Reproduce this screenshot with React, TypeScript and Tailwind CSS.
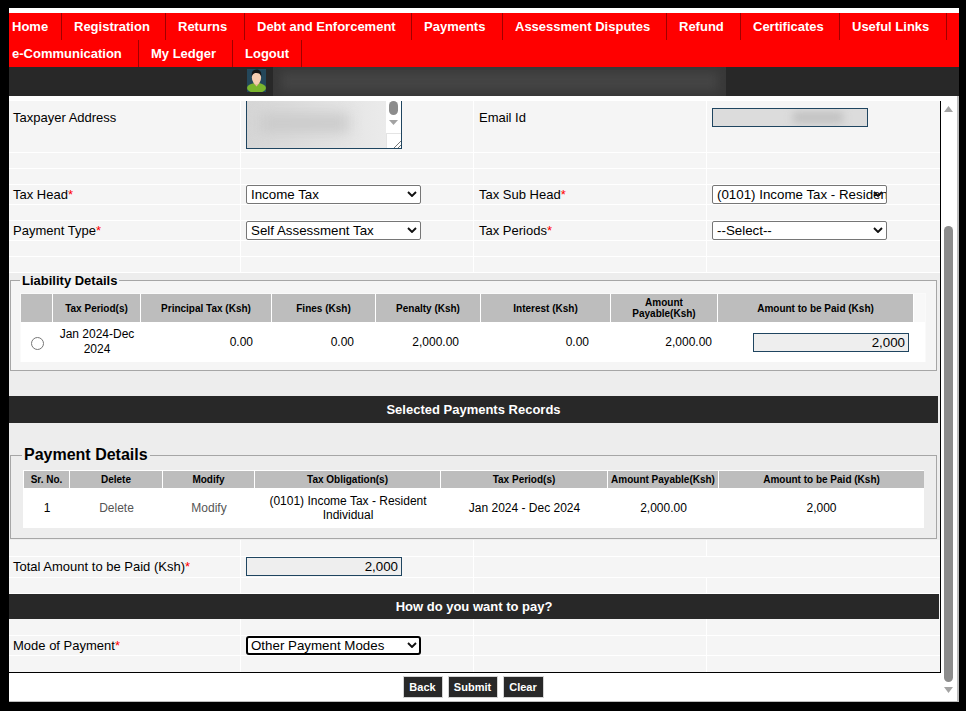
import { ReactNode } from "react";

const navTop = [
  { label: "Home", cls: "w-[53px] pl-[3px]" },
  { label: "Registration", cls: "w-[104px] pl-3" },
  { label: "Returns", cls: "w-[79px] pl-3" },
  { label: "Debt and Enforcement", cls: "w-[167px] pl-3" },
  { label: "Payments", cls: "w-[91px] pl-3" },
  { label: "Assessment Disputes", cls: "w-[164px] pl-3" },
  { label: "Refund", cls: "w-[74px] pl-3" },
  { label: "Certificates", cls: "w-[99px] pl-3" },
  { label: "Useful Links", cls: "w-[107px] pl-3" },
];

const navBottom = [
  { label: "e-Communication", cls: "w-[130px] pl-[3px]" },
  { label: "My Ledger", cls: "w-[94px] pl-3" },
  { label: "Logout", cls: "w-[69px] pl-3" },
];

const liabilityCols = [
  { label: "", cls: "w-[32px]" },
  { label: "Tax Period(s)", cls: "w-[88px]" },
  { label: "Principal Tax (Ksh)", cls: "w-[131px]" },
  { label: "Fines (Ksh)", cls: "w-[104px]" },
  { label: "Penalty (Ksh)", cls: "w-[105px]" },
  { label: "Interest (Ksh)", cls: "w-[130px]" },
  { label: "Amount Payable(Ksh)", cls: "w-[107px]" },
  { label: "Amount to be Paid (Ksh)", cls: "w-[196px]" },
];

const paymentCols = [
  { label: "Sr. No.", cls: "w-[46px]" },
  { label: "Delete", cls: "w-[93px]" },
  { label: "Modify", cls: "w-[92px]" },
  { label: "Tax Obligation(s)", cls: "w-[186px]" },
  { label: "Tax Period(s)", cls: "w-[167px]" },
  { label: "Amount Payable(Ksh)", cls: "w-[111px]" },
  { label: "Amount to be Paid (Ksh)", cls: "w-[205px]" },
];

const actions = [
  { label: "Back", cls: "w-[40px]" },
  { label: "Submit", cls: "w-[50px]" },
  { label: "Clear", cls: "w-[41px]" },
];

function NavRow({ items }: { items: { label: string; cls: string }[] }) {
  return (
    <div className="flex h-[27px]">
      {items.map((item) => (
        <a
          key={item.label}
          href="#"
          className={`${item.cls} flex items-center border-r border-[#a00000] text-[13px] font-bold text-white`}
        >
          {item.label}
        </a>
      ))}
    </div>
  );
}

function Required() {
  return <span className="text-[#ff0000]">*</span>;
}

// one row of the four column form table
function FormRow({ h, cells }: { h: string; cells?: ReactNode[] }) {
  return (
    <div className={`${h} grid grid-cols-[232px_233px_233px_233px] border-b border-white`}>
      {[0, 1, 2, 3].map((i) => (
        <div
          key={i}
          className={`flex items-start overflow-hidden ${i === 0 ? "pl-1" : "pl-[5px]"} ${i < 3 ? "border-r border-white" : ""}`}
        >
          {cells?.[i]}
        </div>
      ))}
    </div>
  );
}

function Label({ children }: { children: ReactNode }) {
  return <span className="block text-[13px] leading-[19px] text-black">{children}</span>;
}

function Dropdown({ value, thick }: { value: string; thick?: boolean }) {
  return (
    <div className="relative h-[19px] w-[175px]">
      <select
        defaultValue={value}
        className={`block h-[19px] w-[175px] appearance-none bg-white text-[13.33px] leading-[15px] text-black ${
          thick ? "rounded-[3px] border-2 border-black pl-[3px]" : "rounded-[2px] border border-[#767676] pl-[4px]"
        }`}
      >
        <option>{value}</option>
      </select>
      <svg
        viewBox="0 0 10 6"
        className="pointer-events-none absolute right-[4px] top-[6px] h-[6px] w-[10px]"
      >
        <path d="M1 1 L5 5 L9 1" fill="none" stroke="#111" strokeWidth="1.9" />
      </svg>
    </div>
  );
}

function AmountBox({ value }: { value: string }) {
  return (
    <input
      readOnly
      value={value}
      className="block h-[19px] w-[156px] border border-[#1f4560] bg-[#eeeeee] pr-[3px] text-right text-[13.33px] text-black"
    />
  );
}

function Avatar() {
  return (
    <svg viewBox="0 0 19 23" className="h-[23px] w-[19px]">
      <rect width="19" height="23" fill="#24475a" />
      <ellipse cx="9.5" cy="19" rx="9.5" ry="5" fill="#7ab52e" />
      <path d="M6.5 14 L9.5 17.5 L12.5 14 Z" fill="#e8b896" />
      <ellipse cx="9.5" cy="8.5" rx="4.6" ry="6.800" fill="#f5cdb0" />
      <path d="M4.800 7.500 C4 2.500 6.500 0.500 9.500 0.500 C12.500 0.500 15 2.500 14.200 7.500 C13.500 5 12 4 9.500 4 C7 4 5.500 5 4.800 7.500 Z" fill="#141414" />
    </svg>
  );
}

function Scrollbar() {
  return (
    <div className="flex w-[16px] flex-col items-center pl-[3px] pr-[4px] pt-[10px]">
      <svg viewBox="0 0 9 6" className="h-[6px] w-[9px]">
        <path d="M4.500 0 L9 6 H0 Z" fill="#a3a3a3" />
      </svg>
      <div className="mt-[114px] h-[456px] w-[9px] rounded-full bg-[#8c8c8c]" />
      <svg viewBox="0 0 9 6" className="mt-[5px] h-[6px] w-[9px]">
        <path d="M0 0 H9 L4.500 6 Z" fill="#a3a3a3" />
      </svg>
    </div>
  );
}

export default function App() {
  return (
    <div className="h-[711px] w-[966px] overflow-hidden bg-black pl-[9px] pt-2 font-['Liberation_Sans',Arial,sans-serif]">
      <div className="w-[950px] bg-white pt-[5px]">
        {/* Main menu */}
        <nav className="bg-[#ff0000]">
          <NavRow items={navTop} />
          <NavRow items={navBottom} />
        </nav>

        {/* Taxpayer strip */}
        <div className="relative flex h-[29px] overflow-hidden bg-[#282828]">
          <div className="ml-[238px] mt-[2px]">
            <Avatar />
          </div>
          <div className="ml-[7px] h-[29px] w-[453px] overflow-hidden bg-[#383838]">
            <div className="ml-2 mt-[5px] h-[19px] w-[437px] bg-[#444444] blur-[5px]" />
          </div>
        </div>

        <div className="flex h-[606px] border-b border-r-2 border-[#bdbdbd]">
          <div className="w-[932px] pt-[5px]">
            <div className="h-[572px] w-[932px] overflow-hidden border-b border-r border-black bg-[#ededed]">
              {/* Top form */}
              <div className="bg-[#f5f5f5]">
                <FormRow
                  h="h-[52px]"
                  cells={[
                    <div className="pt-[7px]"><Label>Taxpayer Address</Label></div>,
                    <div className="h-[48px] w-[156px] overflow-hidden border-x border-b border-[#1f4560] bg-white">
                      <div className="flex h-[47px]">
                        <div className="h-[47px] w-[139px] overflow-hidden bg-linear-to-r from-[#d6d6d6] to-[#ebebeb]">
                          <div className="ml-3 mt-3 h-[20px] w-[90px] bg-[#cbcbcb] blur-[7px]" />
                        </div>
                        <div className="flex w-[15px] flex-col items-center">
                          <div className="h-[14px] w-[9px] rounded-full bg-[#8c8c8c]" />
                          <svg viewBox="0 0 9 5" className="mt-[5px] h-[5px] w-[9px]">
                            <path d="M0 0 H9 L4.500 5 Z" fill="#a3a3a3" />
                          </svg>
                          <div className="mt-[8px] flex h-[15px] w-[15px] items-end justify-end border-l border-t border-[#e4e4e4]">
                            <svg viewBox="0 0 8 8" className="h-2 w-2">
                              <path d="M1 8 L8 1 M5 8 L8 5" stroke="#555" strokeWidth="0.8" />
                            </svg>
                          </div>
                        </div>
                      </div>
                    </div>,
                    <div className="pt-[7px]"><Label>Email Id</Label></div>,
                    <div className="pt-[7px]">
                      <div className="h-[19px] w-[156px] overflow-hidden border border-[#1f4560] bg-[#dcdcdc]">
                        <div className="ml-20 mt-[3px] h-[11px] w-[50px] bg-[#c0c0c0] blur-[4px]" />
                      </div>
                    </div>,
                  ]}
                />
                <FormRow h="h-[16px]" />
                <FormRow h="h-[16px]" />
                <FormRow
                  h="h-[20px]"
                  cells={[
                    <Label>Tax Head<Required /></Label>,
                    <Dropdown value="Income Tax" />,
                    <Label>Tax Sub Head<Required /></Label>,
                    <Dropdown value="(0101) Income Tax - Resident Individual" />,
                  ]}
                />
                <FormRow h="h-[16px]" />
                <FormRow
                  h="h-[20px]"
                  cells={[
                    <Label>Payment Type<Required /></Label>,
                    <Dropdown value="Self Assessment Tax" />,
                    <Label>Tax Periods<Required /></Label>,
                    <Dropdown value="--Select--" />,
                  ]}
                />
                <FormRow h="h-[16px]" />
                <FormRow h="h-[16px]" />
              </div>

              {/* Liability Details */}
              <fieldset className="ml-px w-[927px] border border-[#a6a6a6] bg-[#f5f5f5] pb-[8px] pl-[9px] pt-[5px]">
                <legend className="px-[2px] text-[13px] font-bold leading-[15px] text-black">
                  Liability Details
                </legend>
                <div className="w-[906px] border-x border-t border-[#fafafa] bg-white">
                  <table className="w-[904px] table-fixed border-separate border-spacing-0">
                    <thead>
                      <tr>
                        {liabilityCols.map((col) => (
                          <th
                            key={col.label}
                            className={`${col.cls} h-[28px] border-r border-white bg-[#bdbdbd] px-1 text-center text-[10px] font-bold leading-[11px] text-black`}
                          >
                            {col.label}
                          </th>
                        ))}
                        <th className="w-[11px] bg-[#f8f8f8]" />
                      </tr>
                    </thead>
                    <tbody>
                      <tr className="h-[40px] text-[12px] leading-[15px] text-black">
                        <td className="text-center">
                          <input type="radio" name="period" className="relative top-[1px] m-0 h-[13px] w-[13px] align-middle" />
                        </td>
                        <td className="px-[4px] text-center">Jan 2024-Dec 2024</td>
                        <td className="pr-[19px] text-right">0.00</td>
                        <td className="pr-[22px] text-right">0.00</td>
                        <td className="pr-[22px] text-right">2,000.00</td>
                        <td className="pr-[22px] text-right">0.00</td>
                        <td className="pr-[6px] text-right">2,000.00</td>
                        <td className="pl-[35px]">
                          <AmountBox value="2,000" />
                        </td>
                        <td />
                      </tr>
                    </tbody>
                  </table>
                </div>
              </fieldset>

              <div className="mt-[25px] flex h-[27px] w-[929px] items-center justify-center bg-[#282828] text-[13px] font-bold text-white">
                Selected Payments Records
              </div>

              {/* Payment Details */}
              <fieldset className="ml-px mt-[23px] w-[927px] border border-[#a6a6a6] pb-[10px] pl-[12px] pt-[6px]">
                <legend className="-ml-px px-[2px] text-[16px] font-bold leading-[18px] text-black">
                  Payment Details
                </legend>
                <div className="w-[901px] border-l border-t border-white bg-white">
                  <table className="w-[900px] table-fixed border-separate border-spacing-0">
                    <thead>
                      <tr>
                        {paymentCols.map((col, i) => (
                          <th
                            key={col.label + i}
                            className={`${col.cls} h-[17px] border-white bg-[#bdbdbd] text-center text-[10px] font-bold leading-[11px] text-black ${i < 6 ? "border-r" : ""}`}
                          >
                            {col.label}
                          </th>
                        ))}
                      </tr>
                    </thead>
                    <tbody>
                      <tr className="h-[40px] text-center text-[12px] leading-[14px] text-black">
                        <td>1</td>
                        <td className="text-[#555555]">Delete</td>
                        <td className="text-[#555555]">Modify</td>
                        <td>(0101) Income Tax - Resident Individual</td>
                        <td>Jan 2024 - Dec 2024</td>
                        <td>2,000.00</td>
                        <td>2,000</td>
                      </tr>
                    </tbody>
                  </table>
                </div>
              </fieldset>

              {/* Total and mode of payment */}
              <div className="mt-px bg-[#f5f5f5]">
                <FormRow h="h-[17px]" />
                <div className="grid h-[21px] grid-cols-[232px_233px_466px] border-b border-white">
                  <div className="border-r border-white pl-1">
                    <Label>Total Amount to be Paid (Ksh)<Required /></Label>
                  </div>
                  <div className="border-r border-white pl-[5px]">
                    <AmountBox value="2,000" />
                  </div>
                  <div />
                </div>
                <FormRow h="h-[16px]" />
                <div className="flex h-[25px] w-[930px] items-center justify-center bg-[#282828] text-[13px] font-bold text-white">
                  How do you want to pay?
                </div>
                <FormRow h="h-[17px]" />
                <FormRow
                  h="h-[20px]"
                  cells={[
                    <Label>Mode of Payment<Required /></Label>,
                    <Dropdown value="Other Payment Modes" thick />,
                  ]}
                />
                <div className="grid h-[16px] grid-cols-[232px_233px_233px_233px]">
                  <div className="border-r border-white" />
                  <div className="border-r border-white" />
                  <div className="border-r border-white" />
                  <div />
                </div>
              </div>
            </div>

            <div className="flex w-[931px] justify-center gap-[5px] pr-[3px] pt-[3px]">
              {actions.map((action) => (
                <button
                  key={action.label}
                  className={`${action.cls} h-[22px] border border-[#d4d4d4] bg-[#282828] text-[11px] font-bold text-white`}
                >
                  {action.label}
                </button>
              ))}
            </div>
          </div>
          <Scrollbar />
        </div>
      </div>
    </div>
  );
}
